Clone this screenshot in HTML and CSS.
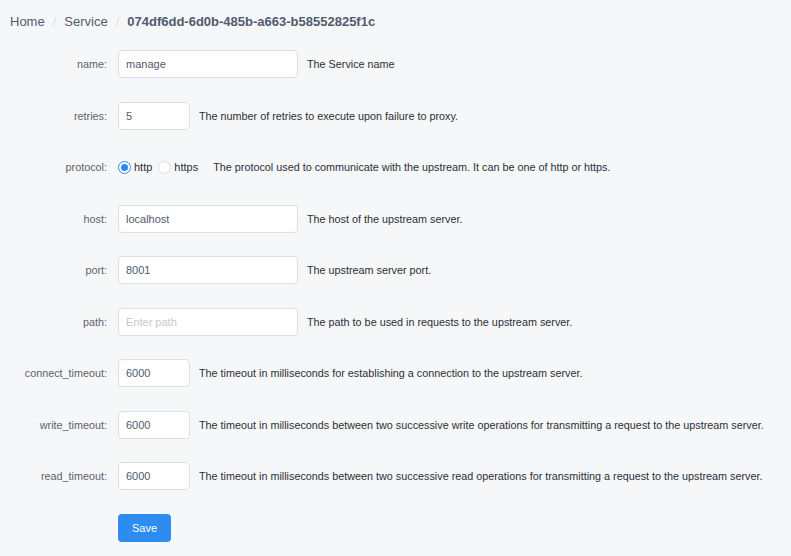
FILE: index.html
```
<!DOCTYPE html>
<html lang="en">
<head>
    <meta charset="UTF-8">
    <meta name="viewport" content="width=device-width, initial-scale=1.0">
    <title>Service</title>
    <link rel="stylesheet" href="styles.css">
</head>
<body>
    <div class="breadcrumb">
        <span class="crumb">Home</span>
        <span class="sep">/</span>
        <span class="crumb">Service</span>
        <span class="sep">/</span>
        <span class="crumb current">074df6dd-6d0b-485b-a663-b58552825f1c</span>
    </div>

    <form class="form">
        <div class="row">
            <label for="name">name:</label>
            <input type="text" id="name" class="wide" value="manage">
            <span class="help">The Service name</span>
        </div>
        <div class="row">
            <label for="retries">retries:</label>
            <input type="text" id="retries" class="narrow" value="5">
            <span class="help">The number of retries to execute upon failure to proxy.</span>
        </div>
        <div class="row">
            <label>protocol:</label>
            <div class="radios">
                <span class="radio checked"><span class="dot"></span></span>
                <span class="radio-text">http</span>
                <span class="radio"><span class="dot"></span></span>
                <span class="radio-text">https</span>
            </div>
            <span class="help">The protocol used to communicate with the upstream. It can be one of http or https.</span>
        </div>
        <div class="row">
            <label for="host">host:</label>
            <input type="text" id="host" class="wide" value="localhost">
            <span class="help">The host of the upstream server.</span>
        </div>
        <div class="row">
            <label for="port">port:</label>
            <input type="text" id="port" class="wide" value="8001">
            <span class="help">The upstream server port.</span>
        </div>
        <div class="row">
            <label for="path">path:</label>
            <input type="text" id="path" class="wide" placeholder="Enter path">
            <span class="help">The path to be used in requests to the upstream server.</span>
        </div>
        <div class="row">
            <label for="connect">connect_timeout:</label>
            <input type="text" id="connect" class="narrow" value="6000">
            <span class="help">The timeout in milliseconds for establishing a connection to the upstream server.</span>
        </div>
        <div class="row">
            <label for="write">write_timeout:</label>
            <input type="text" id="write" class="narrow" value="6000">
            <span class="help">The timeout in milliseconds between two successive write operations for transmitting a request to the upstream server.</span>
        </div>
        <div class="row">
            <label for="read">read_timeout:</label>
            <input type="text" id="read" class="narrow" value="6000">
            <span class="help">The timeout in milliseconds between two successive read operations for transmitting a request to the upstream server.</span>
        </div>
        <div class="row">
            <label></label>
            <button type="button" class="save">Save</button>
        </div>
    </form>
</body>
</html>
```

FILE: styles.css
```
body {
    font-family: 'Liberation Sans', Arial, sans-serif;
    background: #f5f7f9;
    color: #515a6e;
    margin: 0;
    padding: 0;
}

.breadcrumb {
    display: flex;
    padding: 11px 10px 0;
    line-height: 22px;
    font-size: 13px;
    color: #515a6e;
}

.sep {
    color: #dcdee2;
    padding: 0 8px;
}

.current {
    font-weight: bold;
    color: #515a6e;
}

.form {
    margin-top: 17px;
}

.row {
    display: flex;
    align-items: center;
    height: 28px;
    margin-bottom: 23.5px;
    font-size: 11px;
}

label {
    width: 107px;
    padding-right: 11px;
    text-align: right;
    color: #5c6270;
    font-size: 10.8px;
}

input {
    box-sizing: border-box;
    height: 28px;
    padding: 0 7px;
    border: 1px solid #dcdee2;
    border-radius: 4px;
    background: #fff;
    font-family: inherit;
    font-size: 11px;
    color: #515a6e;
    outline: none;
}

input::placeholder {
    color: #c5c8ce;
}

.wide {
    width: 180px;
}

.narrow {
    width: 72px;
}

.help {
    margin-left: 9px;
    color: #2b2f38;
    font-size: 10.8px;
    white-space: nowrap;
}

.radios {
    display: flex;
    align-items: center;
    margin-right: 6px;
}

.radio {
    box-sizing: border-box;
    width: 13px;
    height: 13px;
    border: 1px solid #dcdee2;
    border-radius: 50%;
    background: #fff;
    display: flex;
    align-items: center;
    justify-content: center;
}

.radio.checked {
    border-color: #2d8cf0;
}

.radio.checked .dot {
    width: 7px;
    height: 7px;
    border-radius: 50%;
    background: #2d8cf0;
}

.radio-text {
    margin: 0 6px 0 3px;
    font-size: 11px;
    color: #2b2f38;
}

.radio-text:last-child {
    margin-right: 0;
}

.save {
    box-sizing: border-box;
    width: 53px;
    height: 28px;
    border: none;
    border-radius: 4px;
    background: #2d8cf0;
    color: #fff;
    font-family: inherit;
    font-size: 11px;
    cursor: pointer;
}
```
